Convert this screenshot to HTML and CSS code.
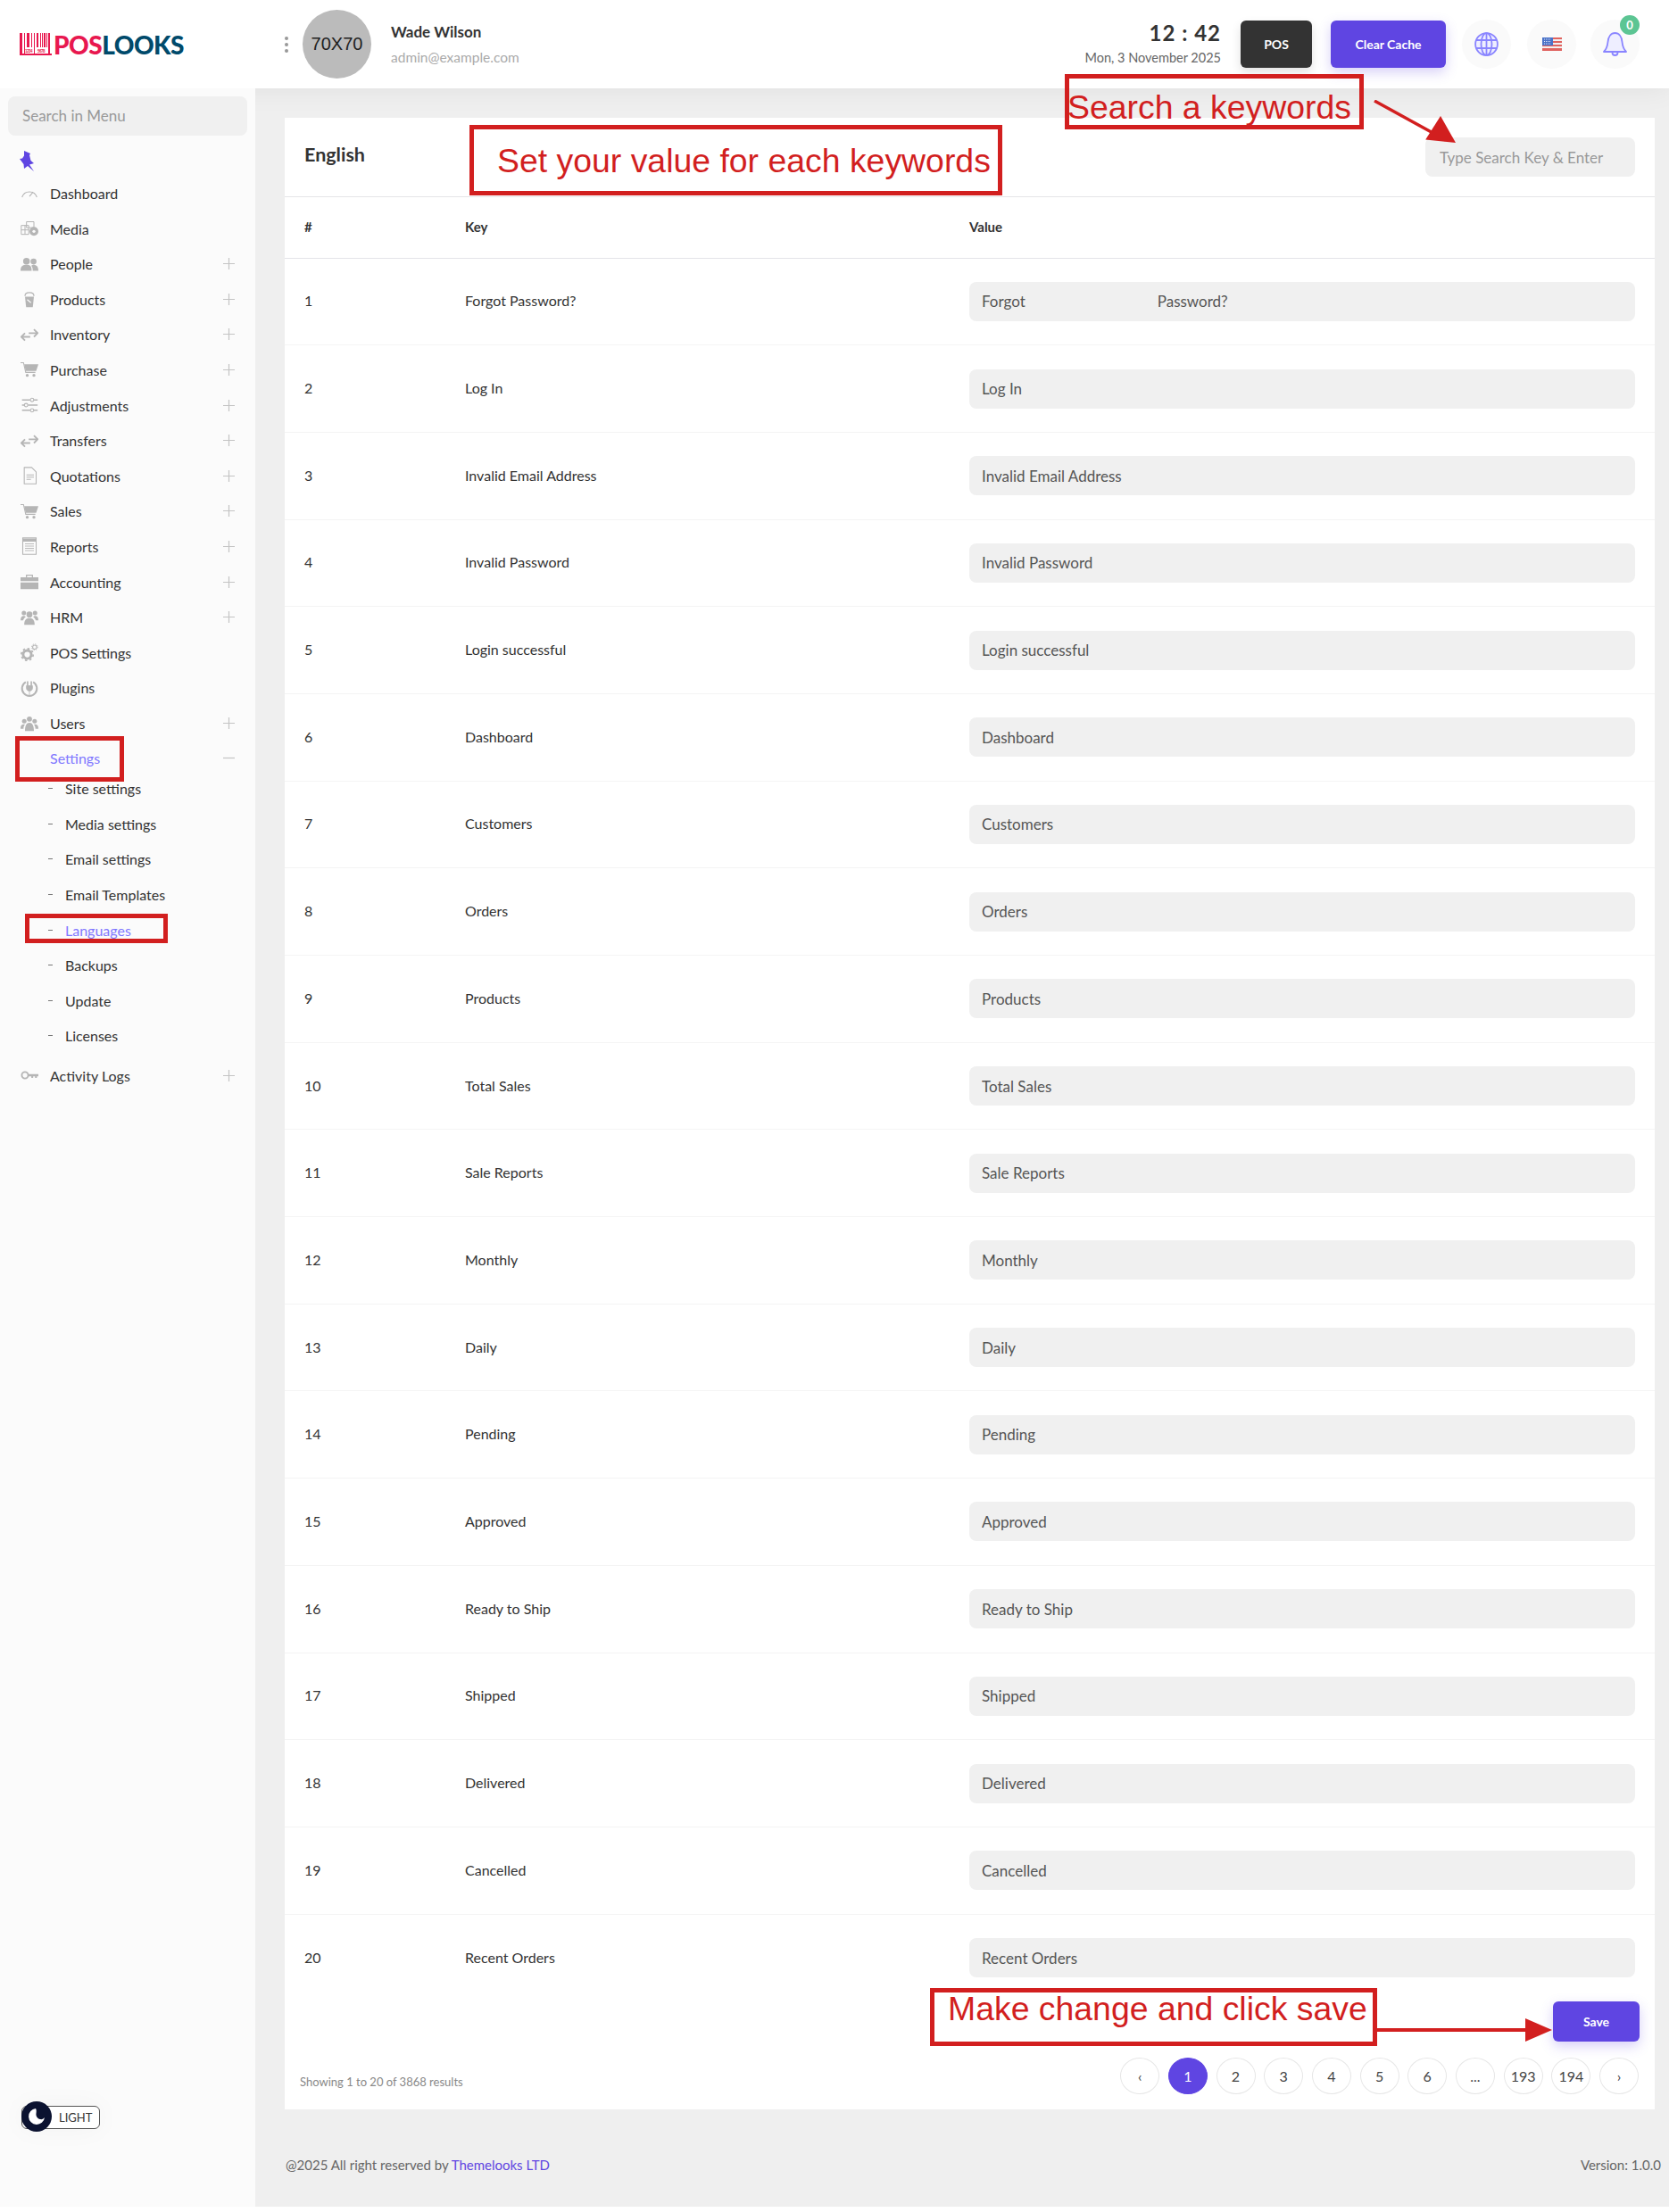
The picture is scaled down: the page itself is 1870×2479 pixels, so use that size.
FILE: index.html
```html
<!DOCTYPE html>
<html lang="en">
<head>
    <meta charset="UTF-8">
    <title>Language settings</title>
    <link rel="stylesheet" href="styles.css">
</head>
<body>

<svg class="defs" width="0" height="0">
    <symbol id="i-gauge" viewBox="0 0 24 24"><path d="M2 18a10.500 10.500 0 0 1 20 0M12 17l5-6" fill="none" stroke="currentColor" stroke-width="1.300"/></symbol>
    <symbol id="i-media" viewBox="0 0 24 24"><path d="M1 8h10v12H1zM1 14h10M6 8v12M8 3h10v8H8z" fill="none" stroke="currentColor" stroke-width="1.200"/><circle cx="18" cy="16" r="6" fill="currentColor"/><circle cx="18" cy="16" r="2" fill="#fbfbfb"/></symbol>
    <symbol id="i-people" viewBox="0 0 24 24"><circle cx="8" cy="8" r="4.500" fill="currentColor"/><circle cx="17.500" cy="8.500" r="4" fill="currentColor"/><path d="M0 21c0-6 3-8 8-8s7 2 7 8zM16.500 21c0-3-.5-5-2-7 1-.7 2-1 3-1 4 0 6.500 2.500 6.500 8z" fill="currentColor"/></symbol>
    <symbol id="i-bucket" viewBox="0 0 24 24"><path d="M6 9h12l-1.500 14h-9z" fill="currentColor"/><path d="M6 8c0-6 12-6 12 0" fill="none" stroke="currentColor" stroke-width="1.500"/><path d="M9 13l5 4" stroke="#fbfbfb" stroke-width="1.500"/></symbol>
    <symbol id="i-swap" viewBox="0 0 24 24"><path d="M1 15h12M6 10l-5 5 5 5M11 10h12M18 5l5 5-5 5" fill="none" stroke="currentColor" stroke-width="2.200"/></symbol>
    <symbol id="i-cart" viewBox="0 0 24 24"><path d="M0 3h4l3 13h13" fill="none" stroke="currentColor" stroke-width="1.300"/><path d="M5 5h19l-3 9H7z" fill="currentColor"/><circle cx="9" cy="20" r="2" fill="currentColor"/><circle cx="18" cy="20" r="2" fill="currentColor"/></symbol>
    <symbol id="i-sliders" viewBox="0 0 24 24"><path d="M2 5h11M18 5h5M2 12h3M10 12h13M2 19h11M18 19h5" stroke="currentColor" stroke-width="1.800"/><circle cx="15.500" cy="5" r="2.300" fill="none" stroke="currentColor" stroke-width="1.300"/><circle cx="7.500" cy="12" r="2.300" fill="none" stroke="currentColor" stroke-width="1.300"/><circle cx="15.500" cy="19" r="2.300" fill="none" stroke="currentColor" stroke-width="1.300"/></symbol>
    <symbol id="i-doc" viewBox="0 0 24 24"><path d="M5 1h10l6 6v16H5z" fill="none" stroke="currentColor" stroke-width="1.300" stroke-linejoin="round"/><path d="M8 11h10M8 14h10M8 17h6" stroke="currentColor" stroke-width="1.300"/></symbol>
    <symbol id="i-report" viewBox="0 0 24 24"><path d="M3 1h18v22H3z" fill="none" stroke="currentColor" stroke-width="1.300"/><path d="M3 2h18v4H3z" fill="currentColor"/><path d="M6 9h12M6 12h12M6 15h12M6 18h12" stroke="currentColor" stroke-width="1.100"/></symbol>
    <symbol id="i-case" viewBox="0 0 24 24"><path d="M8 6V3h8v3" fill="none" stroke="currentColor" stroke-width="1.500"/><path d="M0 6h24v5H0zM0 13h24v9H0z" fill="currentColor"/></symbol>
    <symbol id="i-group" viewBox="0 0 24 24"><circle cx="12" cy="8" r="4" fill="currentColor"/><circle cx="4.500" cy="6" r="3" fill="currentColor"/><circle cx="19.500" cy="6" r="3" fill="currentColor"/><path d="M5 22c0-6 2-9 7-9s7 3 7 9zM0 16c0-4 1.500-6 4.500-6 1 0 2 .3 2.500 1-2 1.500-3 3-3.500 5zM24 16c0-4-1.500-6-4.500-6-1 0-2 .3-2.500 1 2 1.500 3 3 3.500 5z" fill="currentColor"/></symbol>
    <symbol id="i-gears" viewBox="0 0 24 24"><circle cx="9" cy="15" r="5.500" fill="none" stroke="currentColor" stroke-width="3.500"/><circle cx="9" cy="15" r="8" fill="none" stroke="currentColor" stroke-width="2" stroke-dasharray="3 3.280"/><circle cx="19" cy="5" r="2.700" fill="none" stroke="currentColor" stroke-width="1.300"/><circle cx="19" cy="5" r="4" fill="none" stroke="currentColor" stroke-width="1.200" stroke-dasharray="1.500 1.640"/></symbol>
    <symbol id="i-plug" viewBox="0 0 24 24"><path d="M7 4a10 10 0 1 0 10 0" fill="none" stroke="currentColor" stroke-width="2.400"/><path d="M8 9h8v3c0 3-2 4-4 4s-4-1-4-4zM12 16v7" fill="currentColor" stroke="currentColor" stroke-width="1"/><path d="M9.500 3v6M14.500 3v6" stroke="currentColor" stroke-width="2"/></symbol>
    <symbol id="i-users" viewBox="0 0 24 24"><circle cx="12" cy="7" r="3.500" fill="currentColor"/><circle cx="5" cy="10" r="3" fill="currentColor"/><circle cx="19" cy="10" r="3" fill="currentColor"/><path d="M6 23c0-7 2-11 6-11s6 4 6 11zM0 20c0-4 1-6 5-6l1 .5c-1.500 1.500-2 3.500-2 5.500zM24 20c0-4-1-6-5-6l-1 .5c1.500 1.500 2 3.500 2 5.500z" fill="currentColor"/></symbol>
    <symbol id="i-key" viewBox="0 0 24 24"><circle cx="6" cy="12" r="4.300" fill="none" stroke="currentColor" stroke-width="2.200"/><path d="M10 10.500h14v3h-2v2h-2.500v-2H17v2h-2.500v-2H10z" fill="currentColor"/></symbol>
    <symbol id="i-plus" viewBox="0 0 13 13"><path d="M0 6.500h13M6.500 0v13" stroke="currentColor" stroke-width="1.200"/></symbol>
    <symbol id="i-minus" viewBox="0 0 13 13"><path d="M0 6.500h13" stroke="currentColor" stroke-width="1.200"/></symbol>
</svg>

<div class="page">

    <header class="topbar">
        <a class="logo" href="#">
            <svg class="logo-bars" width="36" height="25" viewBox="0 0 36 25">
                <path fill="#e8184f" d="M0 0h3v25H0zM5 0h1v25H5zM8 0h3v16H8zM13 0h1v16h-1zM16 0h1v25h-1zM19 0h2v16h-2zM23 0h1v16h-1zM25 0h1v16h-1zM27 0h2v16h-2zM30 0h1v16h-1zM32 0h2v25h-2zM0 23h36v2H0z"/>
                <text x="6" y="22" font-size="4.500" fill="#e8184f">1234</text>
                <text x="20" y="22" font-size="4.500" fill="#e8184f">5678</text>
            </svg>
            <span class="logo-pos">POS</span><span class="logo-looks">LOOKS</span>
        </a>
        <div class="kebab"><i></i><i></i><i></i></div>
        <div class="avatar">70X70</div>
        <div class="user">
            <strong>Wade Wilson</strong>
            <span>admin@example.com</span>
        </div>
        <div class="clock">
            <strong>12 : 42</strong>
            <span>Mon, 3 November 2025</span>
        </div>
        <a class="btn btn-dark" href="#">POS</a>
        <a class="btn btn-primary" href="#">Clear Cache</a>
        <div class="round">
            <svg width="27" height="27" viewBox="0 0 27 27" fill="#eeeeff" stroke="#8a85ff" stroke-width="1.800">
                <circle cx="13.500" cy="13.500" r="12.400"/>
                <ellipse cx="13.500" cy="13.500" rx="6" ry="12.400"/>
                <path d="M2 9h23M2 18h23M13.500 1v25"/>
            </svg>
        </div>
        <div class="round">
            <svg width="22" height="15" viewBox="0 0 22 15">
                <path fill="#f3f0f0" d="M0 0h22v15H0z"/>
                <path fill="#e0635f" d="M0 0h22v2H0zM0 4h22v2H0zM0 8h22v2H0zM0 12h22v3H0z"/>
                <path fill="#4a72c8" d="M0 0h12v9H0z"/>
                <path d="M2 2h8M2 4.500h8M2 7h8" stroke="#dfe6f8" stroke-dasharray="1 1"/>
            </svg>
        </div>
        <div class="round round-bell">
            <svg width="27" height="27" viewBox="0 0 27 27" fill="#eeeeff" stroke="#8a85ff" stroke-width="1.800" stroke-linejoin="round">
                <path d="M1 22h25c-3-3-4-6-4.500-11C21 5 18 1 13.500 1S6 5 5.500 11C5 16 4 19 1 22z"/>
                <path d="M10.500 23a3 3 0 0 0 6 0"/>
            </svg>
            <span class="badge">0</span>
        </div>
    </header>

    <div class="layout">

        <aside class="sidebar">
            <input class="menu-search" type="text" placeholder="Search in Menu">
            <div class="pin">
                <svg width="18" height="23" viewBox="0 0 18 23"><path fill="#5f45e2" d="M5 0l7 3-1 2 1.500 6 3.500 3-5 1.500 5 7.500-7-6-4 3-.5-5L0 9l3-.5 2-3z"/></svg>
            </div>
            <nav class="menu">
                <a class="menu-item" href="#"><svg class="ico"><use href="#i-gauge"/></svg>Dashboard</a>
                <a class="menu-item" href="#"><svg class="ico"><use href="#i-media"/></svg>Media</a>
                <a class="menu-item" href="#"><svg class="ico"><use href="#i-people"/></svg>People<svg class="toggle-sign"><use href="#i-plus"/></svg></a>
                <a class="menu-item" href="#"><svg class="ico"><use href="#i-bucket"/></svg>Products<svg class="toggle-sign"><use href="#i-plus"/></svg></a>
                <a class="menu-item" href="#"><svg class="ico"><use href="#i-swap"/></svg>Inventory<svg class="toggle-sign"><use href="#i-plus"/></svg></a>
                <a class="menu-item" href="#"><svg class="ico"><use href="#i-cart"/></svg>Purchase<svg class="toggle-sign"><use href="#i-plus"/></svg></a>
                <a class="menu-item" href="#"><svg class="ico"><use href="#i-sliders"/></svg>Adjustments<svg class="toggle-sign"><use href="#i-plus"/></svg></a>
                <a class="menu-item" href="#"><svg class="ico"><use href="#i-swap"/></svg>Transfers<svg class="toggle-sign"><use href="#i-plus"/></svg></a>
                <a class="menu-item" href="#"><svg class="ico"><use href="#i-doc"/></svg>Quotations<svg class="toggle-sign"><use href="#i-plus"/></svg></a>
                <a class="menu-item" href="#"><svg class="ico"><use href="#i-cart"/></svg>Sales<svg class="toggle-sign"><use href="#i-plus"/></svg></a>
                <a class="menu-item" href="#"><svg class="ico"><use href="#i-report"/></svg>Reports<svg class="toggle-sign"><use href="#i-plus"/></svg></a>
                <a class="menu-item" href="#"><svg class="ico"><use href="#i-case"/></svg>Accounting<svg class="toggle-sign"><use href="#i-plus"/></svg></a>
                <a class="menu-item" href="#"><svg class="ico"><use href="#i-group"/></svg>HRM<svg class="toggle-sign"><use href="#i-plus"/></svg></a>
                <a class="menu-item" href="#"><svg class="ico"><use href="#i-gears"/></svg>POS Settings</a>
                <a class="menu-item" href="#"><svg class="ico"><use href="#i-plug"/></svg>Plugins</a>
                <a class="menu-item" href="#"><svg class="ico"><use href="#i-users"/></svg>Users<svg class="toggle-sign"><use href="#i-plus"/></svg></a>
                <a class="menu-item active" href="#"><span class="ico"></span>Settings<svg class="toggle-sign"><use href="#i-minus"/></svg></a>
                <div class="submenu">
                    <a href="#">Site settings</a>
                    <a href="#">Media settings</a>
                    <a href="#">Email settings</a>
                    <a href="#">Email Templates</a>
                    <a class="active" href="#">Languages</a>
                    <a href="#">Backups</a>
                    <a href="#">Update</a>
                    <a href="#">Licenses</a>
                </div>
                <a class="menu-item" href="#"><svg class="ico"><use href="#i-key"/></svg>Activity Logs<svg class="toggle-sign"><use href="#i-plus"/></svg></a>
            </nav>
            <div class="theme-toggle">
                <span class="knob">
                    <svg width="20" height="20" viewBox="0 0 20 20"><path fill="#fff" d="M9 1a9 9 0 1 0 10 10c-1 1.500-3 2.500-5 2-3-.5-5-3.500-4.500-6.500C9.800 4.500 10 2.500 9 1z"/></svg>
                </span>
                LIGHT
            </div>
        </aside>

        <main class="main">
            <section class="card">
                <div class="card-head">
                    <h1>English</h1>
                    <input class="key-search" type="text" placeholder="Type Search Key &amp; Enter">
                </div>
                <table class="lang-table">
                    <thead>
                        <tr><th>#</th><th>Key</th><th>Value</th></tr>
                    </thead>
                    <tbody>
                        <tr><td>1</td><td>Forgot Password?</td><td><input type="text" value="Forgot                                  Password?"></td></tr>
                        <tr><td>2</td><td>Log In</td><td><input type="text" value="Log In"></td></tr>
                        <tr><td>3</td><td>Invalid Email Address</td><td><input type="text" value="Invalid Email Address"></td></tr>
                        <tr><td>4</td><td>Invalid Password</td><td><input type="text" value="Invalid Password"></td></tr>
                        <tr><td>5</td><td>Login successful</td><td><input type="text" value="Login successful"></td></tr>
                        <tr><td>6</td><td>Dashboard</td><td><input type="text" value="Dashboard"></td></tr>
                        <tr><td>7</td><td>Customers</td><td><input type="text" value="Customers"></td></tr>
                        <tr><td>8</td><td>Orders</td><td><input type="text" value="Orders"></td></tr>
                        <tr><td>9</td><td>Products</td><td><input type="text" value="Products"></td></tr>
                        <tr><td>10</td><td>Total Sales</td><td><input type="text" value="Total Sales"></td></tr>
                        <tr><td>11</td><td>Sale Reports</td><td><input type="text" value="Sale Reports"></td></tr>
                        <tr><td>12</td><td>Monthly</td><td><input type="text" value="Monthly"></td></tr>
                        <tr><td>13</td><td>Daily</td><td><input type="text" value="Daily"></td></tr>
                        <tr><td>14</td><td>Pending</td><td><input type="text" value="Pending"></td></tr>
                        <tr><td>15</td><td>Approved</td><td><input type="text" value="Approved"></td></tr>
                        <tr><td>16</td><td>Ready to Ship</td><td><input type="text" value="Ready to Ship"></td></tr>
                        <tr><td>17</td><td>Shipped</td><td><input type="text" value="Shipped"></td></tr>
                        <tr><td>18</td><td>Delivered</td><td><input type="text" value="Delivered"></td></tr>
                        <tr><td>19</td><td>Cancelled</td><td><input type="text" value="Cancelled"></td></tr>
                        <tr><td>20</td><td>Recent Orders</td><td><input type="text" value="Recent Orders"></td></tr>
                    </tbody>
                </table>
                <div class="card-foot">
                    <div class="save-row"><button class="btn btn-primary btn-save">Save</button></div>
                    <div class="pager-row">
                        <span class="results">Showing 1 to 20 of 3868 results</span>
                        <div class="pager">
                            <a href="#">‹</a>
                            <a class="current" href="#">1</a>
                            <a href="#">2</a>
                            <a href="#">3</a>
                            <a href="#">4</a>
                            <a href="#">5</a>
                            <a href="#">6</a>
                            <a href="#">...</a>
                            <a href="#">193</a>
                            <a href="#">194</a>
                            <a href="#">›</a>
                        </div>
                    </div>
                </div>
            </section>
            <footer class="footer">
                <span>@2025 All right reserved by <a href="#">Themelooks LTD</a></span>
                <span>Version: 1.0.0</span>
            </footer>
        </main>
    </div>

    <!-- red notes drawn on top of the page -->
    <div class="note note-value">Set your value for each keywords</div>
    <div class="note note-search">Search a keywords</div>
    <div class="note note-save">Make change and click save</div>
    <div class="note note-settings"></div>
    <div class="note note-languages"></div>
    <svg class="arrow arrow-search" width="100" height="56" viewBox="0 0 100 56">
        <path d="M1 1l80 44" stroke="#d21f1f" stroke-width="3.500"/>
        <path d="M92 48L58 48 72 20z" fill="#d21f1f" transform="rotate(6 92 48)"/>
    </svg>
    <svg class="arrow arrow-save" width="198" height="26" viewBox="0 0 198 26">
        <path d="M0 13h170" stroke="#d21f1f" stroke-width="4"/>
        <path d="M166 0l30 13-30 13z" fill="#d21f1f"/>
    </svg>

</div>

</body>
</html>
```

FILE: styles.css
```css
* {
    box-sizing: border-box;
}

body {
    margin: 0;
    background: #fff;
    font-family: "Lato", "Noto Sans", sans-serif;
    font-size: 16px;
    color: #333;
}

a {
    color: inherit;
    text-decoration: none;
}

.defs {
    position: absolute;
}

.page {
    position: relative;
    width: 1870px;
}

/* top bar */
.topbar {
    position: relative;
    z-index: 2;
    display: flex;
    align-items: center;
    height: 99px;
    background: #fff;
    box-shadow: 0 0 30px rgba(0, 0, 0, 0.07);
}

.logo {
    display: flex;
    align-items: center;
    width: 319px;
    padding-left: 22px;
    font-size: 28px;
    font-weight: 900;
    letter-spacing: -0.5px;
}

.logo-bars {
    margin-right: 2px;
    font-family: "Liberation Sans", sans-serif;
}

.logo-pos {
    color: #e8184f;
}

.logo-looks {
    color: #004a6b;
}

.kebab {
    display: flex;
    flex-direction: column;
    gap: 3px;
    width: 20px;
}

.kebab i {
    width: 4px;
    height: 4px;
    border-radius: 50%;
    background: #999;
}

.avatar {
    display: flex;
    align-items: center;
    justify-content: center;
    width: 77px;
    height: 77px;
    border-radius: 50%;
    background: #bbb;
    font-family: "Liberation Sans", sans-serif;
    font-size: 20px;
    color: #222;
}

.user {
    display: flex;
    flex-direction: column;
    margin-left: 22px;
}

.user strong {
    font-size: 17px;
    line-height: 22px;
    margin-bottom: 7px;
}

.user span {
    font-size: 15.500px;
    line-height: 20px;
    color: #aaa;
}

.clock {
    display: flex;
    flex-direction: column;
    align-items: flex-end;
    margin-left: auto;
    margin-right: 22px;
    padding-bottom: 3px;
}

.clock strong {
    font-size: 24px;
    line-height: 30px;
    letter-spacing: 1px;
}

.clock span {
    font-size: 14.500px;
    line-height: 20px;
    margin-top: 3px;
    color: #666;
}

.btn {
    display: flex;
    align-items: center;
    justify-content: center;
    height: 53px;
    border: 0;
    border-radius: 6px;
    font-family: inherit;
    font-size: 14px;
    font-weight: 700;
    color: #fff;
}

.btn-dark {
    width: 80px;
    background: #333;
    box-shadow: 0 5px 12px rgba(0, 0, 0, 0.12);
}

.btn-primary {
    width: 129px;
    margin-left: 21px;
    background: #5f45e2;
    box-shadow: 0 5px 14px rgba(95, 69, 226, 0.25);
}

.round {
    position: relative;
    display: flex;
    align-items: center;
    justify-content: center;
    width: 55px;
    height: 55px;
    margin-left: 18px;
    border-radius: 50%;
    background: #fafafa;
}

.round-bell {
    margin-left: 16px;
    margin-right: 33px;
}

.badge {
    position: absolute;
    top: -5px;
    right: 0;
    width: 22px;
    height: 22px;
    border-radius: 50%;
    background: #5cc593;
    font-size: 13px;
    font-weight: 700;
    line-height: 22px;
    text-align: center;
    color: #fff;
}

/* page body */
.layout {
    display: flex;
}

.sidebar {
    position: relative;
    z-index: 3;
    display: flex;
    flex-direction: column;
    width: 286px;
    flex: none;
    padding-top: 9px;
    background: #fbfbfb;
}

.menu-search {
    width: 268px;
    height: 44px;
    margin-left: 9px;
    padding: 0 16px 2px;
    border: 0;
    border-radius: 8px;
    background: #f0f0f0;
    font-family: inherit;
    font-size: 17px;
}

.menu-search::placeholder,
.key-search::placeholder {
    color: #999;
}

.pin {
    height: 45.200px;
    padding: 17px 0 0 22px;
}

.menu-item {
    display: flex;
    align-items: center;
    height: 39.600px;
    padding-left: 23px;
    padding-bottom: 1px;
}

.ico {
    width: 20px;
    height: 20px;
    margin-right: 13px;
    flex: none;
    color: #b5b5b5;
}

.toggle-sign {
    width: 13px;
    height: 13px;
    margin-left: auto;
    margin-right: 23px;
    color: #c4c4c4;
}

.active {
    color: #8078ff;
}

.submenu {
    margin: -6px 0 5px;
}

.submenu a {
    position: relative;
    display: block;
    height: 39.600px;
    padding-left: 73px;
    line-height: 39.600px;
}

.submenu a::before {
    content: "";
    position: absolute;
    left: 54px;
    top: 19px;
    width: 5px;
    height: 1px;
    background: #777;
}

.theme-toggle {
    position: relative;
    align-self: flex-start;
    width: 88px;
    height: 26px;
    margin: auto 0 87px 24px;
    padding-left: 41px;
    border: 1px solid #555;
    border-radius: 6px;
    background: #fff;
    box-shadow: 0 0 30px rgba(0, 0, 0, 0.04);
    font-size: 13px;
    line-height: 24px;
}

.knob {
    position: absolute;
    left: -1px;
    top: -6px;
    display: flex;
    align-items: center;
    justify-content: center;
    width: 34px;
    height: 34px;
    border-radius: 50%;
    background: #0b1230;
}

.main {
    flex: 1;
    min-width: 0;
    background: #efefef;
}

.card {
    margin: 33px 16px 0 33px;
    background: #fff;
}

.card-head {
    display: flex;
    align-items: center;
    justify-content: space-between;
    height: 89px;
    padding: 0 22px;
    border-bottom: 1px solid #e4e4e8;
}

.card-head h1 {
    margin: 0 0 7px;
    font-size: 21.500px;
    font-weight: 700;
}

.key-search {
    width: 235px;
    height: 44px;
    padding: 0 16px;
    border: 0;
    border-radius: 8px;
    background: #f0f0f0;
    font-family: inherit;
    font-size: 17px;
}

.lang-table {
    width: 100%;
    table-layout: fixed;
    border-collapse: collapse;
}

.lang-table th {
    height: 68px;
    padding: 0 0 1px;
    border-bottom: 1px solid #e4e4e8;
    font-size: 15px;
    text-align: left;
}

.lang-table td {
    height: 97.700px;
    padding: 0 0 2px;
    border-bottom: 1px solid #f4f4f4;
}

.lang-table tr:last-child td {
    border-bottom: 0;
}

.lang-table th:nth-child(1),
.lang-table td:nth-child(1) {
    width: 202px;
    padding-left: 22px;
}

.lang-table th:nth-child(2),
.lang-table td:nth-child(2) {
    width: 565px;
}

.lang-table th:nth-child(3),
.lang-table td:nth-child(3) {
    padding-right: 22px;
}

.lang-table td:nth-child(3) {
    padding-bottom: 0;
}

.lang-table input {
    display: block;
    width: 100%;
    height: 44px;
    padding: 0 14px;
    border: 0;
    border-radius: 8px;
    background: #f0f0f0;
    font-family: inherit;
    font-size: 17px;
    color: #555;
}

.card-foot {
    padding: 0 17px 17px;
}

.save-row {
    display: flex;
    justify-content: flex-end;
}

.btn-save {
    width: 97px;
    height: 45px;
    margin: 0;
}

.pager-row {
    display: flex;
    align-items: flex-end;
    justify-content: space-between;
    margin-top: 18px;
}

.results {
    margin-bottom: 6px;
    font-size: 13px;
    color: #888;
}

.pager {
    display: flex;
    gap: 9.700px;
    margin-right: 1px;
}

.pager a {
    display: flex;
    align-items: center;
    justify-content: center;
    width: 44px;
    height: 41px;
    border: 1px solid #e6e6e6;
    border-radius: 50%;
    font-size: 16px;
    color: #444;
}

.pager a.current {
    border-color: #5f45e2;
    background: #5f45e2;
    color: #fff;
}

.footer {
    display: flex;
    align-items: center;
    justify-content: space-between;
    height: 109px;
    padding: 16px 9px 0 34px;
    font-size: 15px;
    color: #666;
}

.footer a {
    color: #5f45e2;
}

/* red notes on top */
.note {
    position: absolute;
    z-index: 5;
    border: 5px solid #d21f1f;
    font-family: "Liberation Sans", sans-serif;
    font-size: 37.400px;
    white-space: nowrap;
    color: #d21f1f;
}

.note-value {
    left: 526px;
    top: 140px;
    width: 597px;
    height: 79px;
    padding: 14px 0 0 26px;
}

.note-search {
    left: 1193px;
    top: 83px;
    width: 335px;
    height: 62px;
    padding-top: 11px;
    text-indent: -2px;
}

.note-save {
    left: 1042px;
    top: 2228px;
    width: 501px;
    height: 65px;
    padding-left: 15px;
    line-height: 36px;
}

.note-settings {
    left: 17px;
    top: 825px;
    width: 122px;
    height: 51px;
}

.note-languages {
    left: 28px;
    top: 1024px;
    width: 160px;
    height: 33px;
}

.arrow {
    position: absolute;
    z-index: 5;
}

.arrow-search {
    left: 1539px;
    top: 112px;
}

.arrow-save {
    left: 1543px;
    top: 2262px;
}
```
